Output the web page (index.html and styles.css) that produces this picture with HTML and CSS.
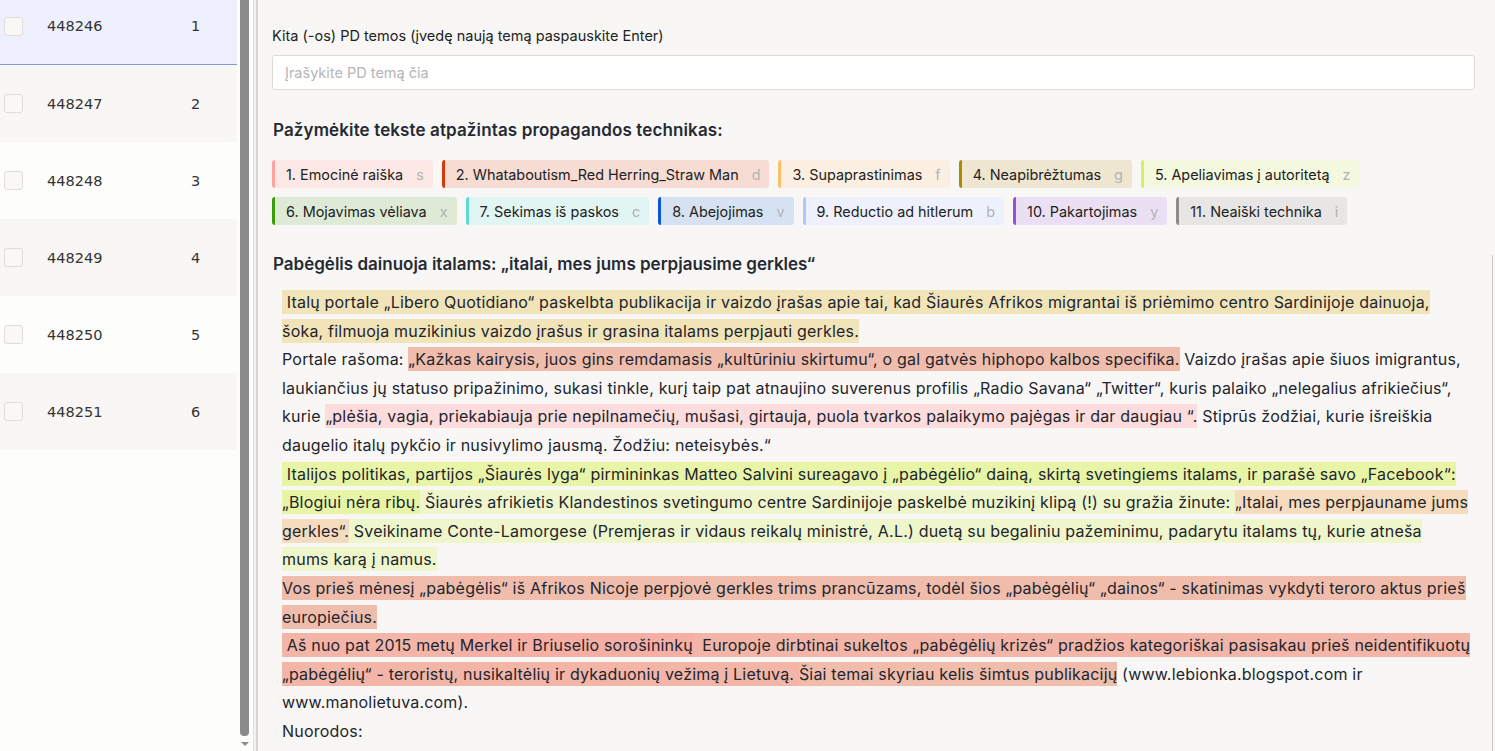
FILE: index.html
```html
<!DOCTYPE html>
<html lang="lt">
<head>
<meta charset="utf-8">
<title>PD anotavimas</title>
<link rel="stylesheet" href="styles.css">
</head>
<body>
<div class="app">
  <aside class="sidebar">
    <div class="list">
      <div class="row active"><span class="cb"></span><span class="rid">448246</span><span class="rnum">1</span></div>
      <div class="row alt"><span class="cb"></span><span class="rid">448247</span><span class="rnum">2</span></div>
      <div class="row"><span class="cb"></span><span class="rid">448248</span><span class="rnum">3</span></div>
      <div class="row alt"><span class="cb"></span><span class="rid">448249</span><span class="rnum">4</span></div>
      <div class="row"><span class="cb"></span><span class="rid">448250</span><span class="rnum">5</span></div>
      <div class="row alt"><span class="cb"></span><span class="rid">448251</span><span class="rnum">6</span></div>
    </div>
  </aside>
  <div class="sbar"><div class="thumb"></div><div class="arrow"></div></div>
  <div class="divider"></div>
  <main class="main">
    <label class="flabel">Kita (-os) PD temos (įvedę naują temą paspauskite Enter)</label>
    <input class="finput" type="text" placeholder="Įrašykite PD temą čia">
    <h3 class="sect">Pažymėkite tekste atpažintas propagandos technikas:</h3>
    <div class="labels">
      <div class="lrow">
        <span class="lab l1">1. Emocinė raiška<em>s</em></span>
        <span class="lab l2">2. Whataboutism_Red Herring_Straw Man<em>d</em></span>
        <span class="lab l3">3. Supaprastinimas<em>f</em></span>
        <span class="lab l4">4. Neapibrėžtumas<em>g</em></span>
        <span class="lab l5">5. Apeliavimas į autoritetą<em>z</em></span>
      </div>
      <div class="lrow">
        <span class="lab l6">6. Mojavimas vėliava<em>x</em></span>
        <span class="lab l7">7. Sekimas iš paskos<em>c</em></span>
        <span class="lab l8">8. Abejojimas<em>v</em></span>
        <span class="lab l9">9. Reductio ad hitlerum<em>b</em></span>
        <span class="lab l10">10. Pakartojimas<em>y</em></span>
        <span class="lab l11">11. Neaiški technika<em>i</em></span>
      </div>
    </div>
    <h3 class="title">Pabėgėlis dainuoja italams: „italai, mes jums perpjausime gerkles“</h3>
    <div class="text"><span class="h-tan"> Italų portale „Libero Quotidiano“ paskelbta publikacija ir vaizdo įrašas apie tai, kad Šiaurės Afrikos migrantai iš priėmimo centro Sardinijoje dainuoja,<br>šoka, filmuoja muzikinius vaizdo įrašus ir grasina italams perpjauti gerkles.</span><br>Portale rašoma: <span class="h-sal">„Kažkas kairysis, juos gins remdamasis „kultūriniu skirtumu“, o gal gatvės hiphopo kalbos specifika.</span> Vaizdo įrašas apie šiuos imigrantus,<br>laukiančius jų statuso pripažinimo, sukasi tinkle, kurį taip pat atnaujino suverenus profilis „Radio Savana“ „Twitter“, kuris palaiko „nelegalius afrikiečius“,<br>kurie <span class="h-pink">„plėšia, vagia, priekabiauja prie nepilnamečių, mušasi, girtauja, puola tvarkos palaikymo pajėgas ir dar daugiau “.</span> Stiprūs žodžiai, kurie išreiškia<br>daugelio italų pykčio ir nusivylimo jausmą. Žodžiu: neteisybės.“<br><span class="h-lime"> Italijos politikas, partijos „Šiaurės lyga“ pirmininkas Matteo Salvini sureagavo į „pabėgėlio“ dainą, skirtą svetingiems italams, ir parašė savo „Facebook“:<br>„Blogiui nėra ribų.</span><span class="h-llime"> Šiaurės afrikietis Klandestinos svetingumo centre Sardinijoje paskelbė muzikinį klipą (!) su gražia žinute: </span><span class="h-peach">„Italai, mes perpjauname jums<br>gerkles“.</span><span class="h-llime"> Sveikiname Conte-Lamorgese (Premjeras ir vidaus reikalų ministrė, A.L.) duetą su begaliniu pažeminimu, padarytu italams tų, kurie atneša<br>mums karą į namus.</span><br><span class="h-sal">Vos prieš mėnesį „pabėgėlis“ iš Afrikos Nicoje perpjovė gerkles trims prancūzams, todėl šios „pabėgėlių“ „dainos“ - skatinimas vykdyti teroro aktus prieš<br>europiečius.</span><br><span class="h-red"> Aš nuo pat 2015 metų </span><span class="h-red2">Merkel ir Briuselio sorošininkų</span><span class="h-red">  Europoje dirbtinai sukeltos „pabėgėlių krizės“ pradžios kategoriškai pasisakau prieš neidentifikuotų<br>„pabėgėlių“ - teroristų, nusikaltėlių ir dykaduonių vežimą į Lietuvą. </span><span class="h-sal">Šiai temai skyriau kelis šimtus publikacijų</span> (www.lebionka.blogspot.com ir<br>www.manolietuva.com).<br>Nuorodos:</div>
  </main>
  <div class="rtrack"></div>
</div>
</body>
</html>
```
FILE: styles.css
```css
* { box-sizing: border-box; }
html, body { margin: 0; padding: 0; height: 100%; overflow: hidden; }
body {
  font-family: Inter, "Noto Sans", sans-serif;
  color: #20232b;
  background: #f8f7f5;
}
.app { display: flex; height: 751px; overflow: hidden; }

.sidebar { width: 237px; flex: none; background: #fdfdfc; overflow: hidden; }
.list { margin-top: -12px; }
.row {
  height: 77px;
  display: flex;
  align-items: center;
  background: #fdfdfb;
  font-family: "DejaVu Sans", sans-serif;
  font-size: 14.5px;
  color: #333;
}
.row.alt { background: #f8f7f5; }
.row.active { background: #eef1fd; border-bottom: 1px solid #8496dc; }
.cb {
  width: 19px; height: 19px; margin-left: 4px;
  border: 1px solid #e1ddd6; border-radius: 3px; background: #f9f8f6;
}
.rid { margin-left: 24px; width: 144px; }

.sbar { width: 16px; flex: none; background: #fdfdfc; padding-left: 3px; display: flex; flex-direction: column; }
.thumb { width: 9px; height: 736px; background: #8b8b8b; border-radius: 0 0 4px 4px; }
.arrow {
  width: 0; height: 0; margin: 6px 0 0 1px;
  border-left: 4px solid transparent; border-right: 4px solid transparent; border-top: 4px solid #8b8b8b;
}
.divider {
  width: 5px; flex: none;
  background: #f3f2f0;
  border-left: 1px solid #e4e1dc;
  border-right: 2px solid #d9d6d1;
}

.main { flex: 1; padding: 27px 20px 0 14px; min-width: 0; }
.flabel { display: block; font-size: 14.5px; line-height: 18px; color: #222; }
.finput {
  display: block; width: 100%; height: 35px; margin-top: 10px;
  border: 1px solid #dedbd6; border-radius: 3px; background: #fff;
  padding: 0 12px; font-family: inherit; font-size: 14.5px; color: #222;
  outline: none;
}
.finput::placeholder { color: #b5b5b5; }
.sect { margin: 29px 0 0 1px; font-size: 17px; letter-spacing: 0.12px; line-height: 22px; font-weight: 600; color: #262a33; }

.labels { display: flex; flex-direction: column; gap: 9px; margin-top: 19px; }
.lrow { display: flex; gap: 9px; }
.lab {
  height: 28px; display: inline-flex; align-items: center;
  padding: 0 9px 0 11px; border-left: 3px solid; border-radius: 3px;
  font-size: 14.4px; color: #222; white-space: nowrap;
}
.lab em { font-style: normal; color: #b3b3b3; margin-left: 13px; }
.l1 { border-color: #ffa39e; background: #fce8e5; }
.l2 { border-color: #d4380d; background: #f6dcd3; }
.l3 { border-color: #ffc069; background: #faefe1; }
.l4 { border-color: #ad8b00; background: #eee6d1; }
.l5 { border-color: #d3f261; background: #f3f8df; }
.l6 { border-color: #389e0d; background: #deead6; }
.l7 { border-color: #5cdbd3; background: #e1f5f2; }
.l8 { border-color: #0958d9; background: #d6e2f1; }
.l9 { border-color: #adc6ff; background: #eef1fb; }
.l10 { border-color: #9254de; background: #ebe0f3; }
.l11 { border-color: #8c8c8c; background: #e7e6e4; }

.title { margin: 28px 0 0 1px; font-size: 17px; line-height: 22px; font-weight: 600; color: #262a33; }
.text {
  margin-top: 13px; padding-left: 10px;
  font-size: 16px; letter-spacing: 0.2px; line-height: 28.6px; white-space: nowrap; color: #22252d;
}
.text span { white-space: pre; padding: 2px 0; }
.h-tan { background: #f1e4b8; }
.h-sal { background: #f0bdad; }
.h-pink { background: #fcdcdc; }
.h-lime { background: #e8f5a7; }
.h-llime { background: #eff6cc; }
.h-peach { background: #f6dcbe; }
.h-red { background: #f3b5a8; }
.h-red2 { background: #f6afa5; }

.rtrack { position: absolute; right: 2px; top: 255px; width: 1px; height: 496px; background: #cfc8c0; }
```
